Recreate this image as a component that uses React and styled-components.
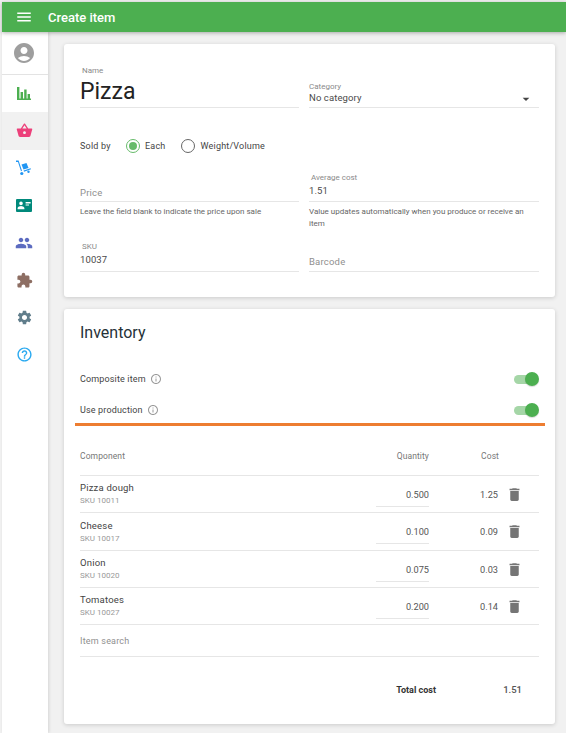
import React from "react";
import styled, { createGlobalStyle } from "styled-components";
import {
  MdMenu, MdAccountCircle, MdShoppingBasket, MdPeople, MdExtension, MdSettings,
  MdHelpOutline, MdDelete, MdInfoOutline, MdArrowDropDown,
} from "react-icons/md";

const Global = createGlobalStyle`
  html, body { margin: 0; padding: 0; background: #f1f1f1; }
  * { box-sizing: border-box; }
  body { font-family: Roboto, "Liberation Sans", sans-serif; color: rgba(0,0,0,.87); }
`;

const Page = styled.div`
  width: 566px; height: 733px; padding: 2px 0 0 2px; background: #f1f1f1;
  display: flex; flex-direction: column; overflow: hidden;
`;
const TopBar = styled.header`
  height: 30px; flex: none; background: #4caf50; color: #fff; display: flex; align-items: center;
  padding-left: 13px; gap: 15px; box-shadow: 0 1px 4px rgba(0,0,0,.3); position: relative; z-index: 2;
  width: 564px;
`;
const Title = styled.div` font-size: 13px; font-weight: 500; `;
const Body = styled.div` flex: 1; display: flex; min-height: 0; `;
const Side = styled.nav`
  width: 46px; flex: none; background: #fff; box-shadow: 1px 0 3px rgba(0,0,0,.12);
  display: flex; flex-direction: column;
`;
const Avatar = styled.div`
  height: 43px; border-bottom: 1px solid #e3e3e3; display: flex; align-items: center; justify-content: center;
  color: #9e9e9e; padding-right: 2px;
`;
const NavItem = styled.div`
  height: 37.3px; display: flex; align-items: center; justify-content: center; color: ${p => p.$c};
  background: ${p => (p.$active ? "#f1f1f1" : "#fff")}; padding-right: 2px;
`;
const Main = styled.main`
  flex: 1; padding: 12px 11px 0 16px; display: flex; flex-direction: column; gap: 12px;
`;
const Card = styled.section`
  background: #fff; border-radius: 3px; box-shadow: 0 1px 4px rgba(0,0,0,.16);
  padding: ${p => p.$pad}; height: ${p => p.$h}px;
`;
const Grid = styled.div`
  display: grid; grid-template-columns: 219px 230px; column-gap: 10px;
  margin-top: ${p => p.$mt || 0}px;
`;
const Field = styled.div`
  height: ${p => p.$h}px; border-bottom: 1px solid #e6e6e6; display: flex; flex-direction: column; justify-content: flex-end;
`;
const Small = styled.div`
  font-size: 8px; line-height: 10px; color: #8a8a8a; padding-left: ${p => p.$i || 0}px; margin-bottom: ${p => p.$mb || 0}px;
`;
const Value = styled.div`
  font-size: 9.5px; line-height: 13px; padding-bottom: ${p => p.$pb ?? 4}px; color: #4a4a4a; letter-spacing: .1px;
`;
const Big = styled.div`
  font-size: 23px; line-height: 28px; padding-bottom: 1px; color: #222;
`;
const Placeholder = styled.div`
  font-size: 9.5px; line-height: 13px; padding-bottom: ${p => p.$pb ?? 2}px; color: #8f8f8f; letter-spacing: .2px;
`;
const SelectRow = styled.div` display: flex; justify-content: space-between; align-items: center; padding-right: 5px; color: #444; `;
const Help = styled.div`
  font-size: 8px; line-height: 12px; color: #666; margin-top: 4px; height: ${p => p.$h}px;
`;
const SoldBy = styled.div`
  display: flex; align-items: center; height: 20px; margin: 28px 0 16px; font-size: 9px; color: #444; letter-spacing: .2px;
`;
const SoldLabel = styled.span` width: 46px; `;
const Radio = styled.span`
  width: 14px; height: 14px; border-radius: 50%; border: 1px solid ${p => (p.$on ? "#66bb6a" : "#666")};
  display: inline-flex; align-items: center; justify-content: center; margin-right: 5px;
  &::after { content: ""; width: 8px; height: 8px; border-radius: 50%; background: ${p => (p.$on ? "#66bb6a" : "transparent")}; }
`;
const RadioLabel = styled.span` margin-right: ${p => p.$m}px; `;
const H2 = styled.h2`
  margin: 0 0 26px; font-size: 16px; line-height: 20px; font-weight: 400; color: #263238;
`;
const ToggleRow = styled.div`
  display: flex; align-items: center; justify-content: space-between; height: 20px; margin-bottom: ${p => p.$mb}px;
  padding-right: 1px; font-size: 9px; letter-spacing: .15px; color: #444;
`;
const ToggleText = styled.span` display: flex; align-items: center; gap: 4px; color: #9a9a9a; & > span { color: #444; } `;
const Switch = styled.div`
  width: 24px; height: 9px; border-radius: 5px; background: #a5d6a7; position: relative;
  &::after { content: ""; position: absolute; right: -1px; top: -2.5px; width: 14px; height: 14px; border-radius: 50%; background: #4caf50; box-shadow: 0 1px 1px rgba(0,0,0,.15); }
`;
const Rule = styled.div` height: 3px; background: #ed7d31; margin: 3px -6px 0 -5px; `;
const Tr = styled.div`
  display: grid; grid-template-columns: 296px 53px 70px 40px; align-items: center;
  height: ${p => p.$h}px; border-bottom: 1px solid #e6e6e6; padding-top: ${p => p.$pt || 0}px;
`;
const Th = styled.div`
  font-size: 8.5px; color: #777; text-align: ${p => (p.$r ? "right" : "left")}; letter-spacing: .1px;
`;
const ItemName = styled.div` font-size: 9.5px; line-height: 12px; color: #444; letter-spacing: .2px; `;
const Sku = styled.div` font-size: 8px; line-height: 11px; color: #999; margin-top: 1px; `;
const Qty = styled.div`
  align-self: stretch; display: flex; align-items: center; justify-content: flex-end; font-size: 9.2px; color: #555;
  border-bottom: 1px solid #e6e6e6; height: 31px; padding-top: 6px;
`;
const Cost = styled.div` font-size: 9.2px; color: #555; text-align: right; padding-right: 1px; `;
const Trash = styled.div` display: flex; justify-content: flex-start; padding-left: 7px; color: #757575; `;
const Search = styled.div`
  height: 32px; border-bottom: 1px solid #e6e6e6; display: flex; align-items: center;
  font-size: 9px; color: #8f8f8f; letter-spacing: .2px;
`;
const Total = styled.div`
  display: flex; justify-content: flex-end; align-items: center; height: 65px; padding-right: 17px; font-size: 9px;
`;
const TotalLabel = styled.div` font-weight: 700; color: #333; width: 107px; font-size: 9px; `;
const TotalVal = styled.div` font-size: 9.5px; font-weight: 500; color: #555; text-align: right; `;

const BarsIcon = () => (
  <svg width="16" height="16" viewBox="0 0 16 16" fill="currentColor">
    <path d="M1 1h2.4v12H1zM4.6 6H7v7H4.6zM8.2 3.5h2.4V13H8.2zM11.6 8H14v5h-2.4z" />
    <path d="M1 12.5h14V14H1z" />
  </svg>
);
const TruckIcon = () => (
  <svg width="18" height="18" viewBox="0 0 18 18" fill="currentColor">
    <path d="M1 1.5h2.6l3.4 10.2-1 .6L3 3H1z" />
    <path d="M6.5 5.5l5-1.6 2 5-5 1.7z" />
    <path d="M8.6 11.6l7-2.4.4 1.1-7 2.4z" />
    <circle cx="6.8" cy="14.5" r="1.6" />
    <circle cx="13.5" cy="12.8" r="1.2" />
  </svg>
);
const CardIcon = () => (
  <svg width="16" height="13" viewBox="0 0 16 13" fill="currentColor">
    <path fillRule="evenodd" d="M1 0h14a1 1 0 0 1 1 1v11a1 1 0 0 1-1 1H1a1 1 0 0 1-1-1V1a1 1 0 0 1 1-1zM5 2.6a1.8 1.8 0 1 0 0 3.6 1.8 1.8 0 0 0 0-3.6zM1.6 10.2h6.8V9c0-1.3-2.3-2-3.4-2s-3.4.7-3.4 2zM9.6 3v1.4h5V3zM9.6 5.4v1.2h3.4V5.4z" />
  </svg>
);

const nav = [
  [<BarsIcon />, "#4caf50"],
  [<MdShoppingBasket size={17} />, "#ec407a", true],
  [<TruckIcon />, "#2196f3"],
  [<CardIcon />, "#00897b"],
  [<MdPeople size={18} />, "#5c6bc0"],
  [<MdExtension size={17} />, "#8d6e63"],
  [<MdSettings size={17} />, "#607d8b"],
  [<MdHelpOutline size={17} />, "#29a9f0"],
];
const items = [
  ["Pizza dough", "SKU 10011", "0.500", "1.25", 37],
  ["Cheese", "SKU 10017", "0.100", "0.09", 38],
  ["Onion", "SKU 10020", "0.075", "0.03", 37],
  ["Tomatoes", "SKU 10027", "0.200", "0.14", 37],
];

export default function App() {
  return (
    <Page>
      <Global />
      <TopBar>
        <MdMenu size={18} />
        <Title>Create item</Title>
      </TopBar>
      <Body>
        <Side>
          <Avatar><MdAccountCircle size={24} /></Avatar>
          {nav.map(([icon, c, active], i) => (
            <NavItem key={i} $c={c} $active={active}>{icon}</NavItem>
          ))}
        </Side>
        <Main>
          <Card $pad="0 16px" $h={253}>
            <Grid>
              <Field $h={64}>
                <Small $i={2} $mb={2}>Name</Small>
                <Big>Pizza</Big>
              </Field>
              <Field $h={64}>
                <Small $mb={-1}>Category</Small>
                <SelectRow>
                  <Value $pb={3}>No category</Value>
                  <MdArrowDropDown size={16} />
                </SelectRow>
              </Field>
            </Grid>
            <SoldBy>
              <SoldLabel>Sold by</SoldLabel>
              <Radio $on />
              <RadioLabel $m={16}>Each</RadioLabel>
              <Radio />
              <RadioLabel>Weight/Volume</RadioLabel>
            </SoldBy>
            <Grid>
              <div>
                <Field $h={30}><Placeholder>Price</Placeholder></Field>
                <Help $h={24}>Leave the field blank to indicate the price upon sale</Help>
              </div>
              <div>
                <Field $h={30}>
                  <Small $i={2} $mb={1}>Average cost</Small>
                  <Value>1.51</Value>
                </Field>
                <Help $h={24}>Value updates automatically when you produce or receive an item</Help>
              </div>
            </Grid>
            <Grid $mt={7}>
              <Field $h={35}>
                <Small $i={2} $mb={1}>SKU</Small>
                <Value $pb={5}>10037</Value>
              </Field>
              <Field $h={35}><Placeholder $pb={3}>Barcode</Placeholder></Field>
            </Grid>
          </Card>
          <Card $pad="14px 16px 0" $h={415}>
            <H2>Inventory</H2>
            <ToggleRow $mb={11}>
              <ToggleText><span>Composite item</span><MdInfoOutline size={12} /></ToggleText>
              <Switch />
            </ToggleRow>
            <ToggleRow $mb={0}>
              <ToggleText><span>Use production</span><MdInfoOutline size={12} /></ToggleText>
              <Switch />
            </ToggleRow>
            <Rule />
            <Tr $h={50} $pt={11}>
              <Th>Component</Th>
              <Th $r>Quantity</Th>
              <Th $r>Cost</Th>
              <div />
            </Tr>
            {items.map(([n, s, q, c, h]) => (
              <Tr key={n} $h={h}>
                <div>
                  <ItemName>{n}</ItemName>
                  <Sku>{s}</Sku>
                </div>
                <Qty>{q}</Qty>
                <Cost>{c}</Cost>
                <Trash><MdDelete size={17} /></Trash>
              </Tr>
            ))}
            <Search>Item search</Search>
            <Total>
              <TotalLabel>Total cost</TotalLabel>
              <TotalVal>1.51</TotalVal>
            </Total>
          </Card>
        </Main>
      </Body>
    </Page>
  );
}
